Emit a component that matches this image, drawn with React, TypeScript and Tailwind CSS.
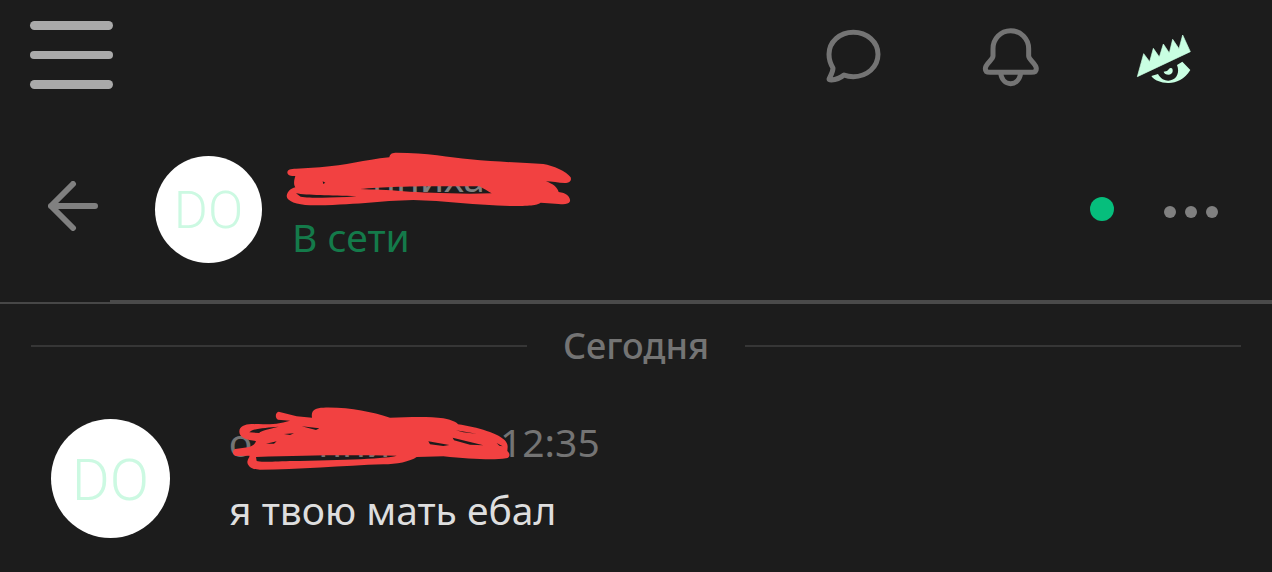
import type { ReactNode } from "react";

interface Message {
  id: number;
  initials: string;
  time: string;
  text: string;
}

const messages: Message[] = [
  { id: 1, initials: "DO", time: "12:35", text: "я твою мать ебал" },
];

export default function App() {
  return (
    <div className="min-h-screen bg-[#1c1c1c] font-['Noto_Sans',sans-serif] text-[#808080]">
      <TopBar />
      <ChatHeader />
      <main>
        <DayDivider>Сегодня</DayDivider>
        {messages.map((m) => (
          <MessageRow key={m.id} message={m} />
        ))}
      </main>
    </div>
  );
}

function TopBar() {
  return (
    <header className="flex h-[110px] items-start justify-between pl-[30px] pr-[76px] pt-[21px]">
      <button type="button" aria-label="Меню" className="flex h-[68px] w-[83px] flex-col justify-between">
        <span className="h-[9px] rounded-full bg-[#aaaaaa]" />
        <span className="h-2 rounded-full bg-[#aaaaaa]" />
        <span className="h-[9px] rounded-full bg-[#aaaaaa]" />
      </button>
      <nav className="flex gap-24 pt-1.5 text-[#747474]">
        <button type="button" aria-label="Сообщения">
          <svg viewBox="72 51 180 180" className="size-[60px]" fill="none" stroke="currentColor" strokeWidth="15" strokeLinejoin="round">
            <path d="M132 195C142 199 152 200 160 200C201 200 234 171 234 133C234 96 201 67 160 67C119 67 87 96 87 133C87 149 92 163 99 174C99 186 93 195 88 205C86 209 89 210 94 210C109 209 121 204 132 195Z" />
          </svg>
        </button>
        <button type="button" aria-label="Уведомления">
          <svg viewBox="540 51 180 180" className="size-[60px]" fill="none" stroke="currentColor" strokeWidth="15" strokeLinejoin="round">
            <path d="M632 62C602 62 579 86 579 116V138C579 150 556 160 556 176C556 184 562 187 570 187H694C703 187 709 184 709 176C709 160 686 150 686 138V116C686 86 662 62 632 62Z" />
            <path d="M602 188C604 208 616 221 632 221C648 221 660 208 662 188" />
          </svg>
        </button>
        <a href="#home" aria-label="Главная" className="text-[#c9ffe2]">
          <svg viewBox="48 21 180 180" className="size-[60px]" fill="currentColor">
            <path d="M52 170L71 101L89 125L100 85L118 111L130 72L148 99L158 58L177 86L188 45L211 95Z" stroke="currentColor" strokeWidth="2" strokeLinejoin="round" />
            <path d="M94 168L114 162C124 180 140 184 152 181C170 177 180 158 171 135L187 125L211 150C193 179 166 190 144 189C122 188 104 182 94 168Z" />
            <path d="M131 155L141 153L150 144L156 145C161 153 157 164 146 164C138 164 132 161 131 155Z" />
          </svg>
        </a>
      </nav>
    </header>
  );
}

function ChatHeader() {
  return (
    <section>
      <div className="flex h-[190px] items-start pl-12 pr-[54px] pt-[37px]">
        <div className="flex flex-1 items-center">
          <button type="button" aria-label="Назад" className="pb-1.5">
            <svg viewBox="84 126 150 150" className="size-[50px]" fill="none" stroke="currentColor" strokeWidth="18" strokeLinecap="round" strokeLinejoin="round">
              <path d="M93 201H225M159 135L93 201L159 267" />
            </svg>
          </button>
          <div className="ml-[57px] flex size-[107px] items-center justify-center rounded-full bg-white pt-1 font-['Roboto',sans-serif] text-[52px] font-light text-[#ccf9e2]">
            DO
          </div>
          <div className="ml-[30px] pb-1 text-[39px] leading-[60px]">
            <div className="relative h-[60px]">
              <span className="pl-20">нниха</span>
              <HeaderScribble />
            </div>
            <p className="text-[#147a4a]">В сети</p>
          </div>
          <span className="ml-auto size-6 rounded-full bg-[#06be7c]" />
          <button type="button" aria-label="Ещё" className="ml-[50px] flex gap-[9px] pt-1.5">
            <span className="size-3 rounded-full bg-[#808080]" />
            <span className="size-3 rounded-full bg-[#808080]" />
            <span className="size-3 rounded-full bg-[#808080]" />
          </button>
        </div>
      </div>
      <div className="flex h-1 items-end">
        <div className="h-0.5 w-[110px] bg-[#474747]" />
        <div className="h-1 flex-1 bg-[#4a4a4a]" />
      </div>
    </section>
  );
}

function DayDivider({ children }: { children: ReactNode }) {
  return (
    <div className="mt-4 flex items-center gap-9 px-[31px]">
      <div className="h-0.5 flex-1 bg-[#363636]" />
      <h2 className="text-[36px] font-medium leading-[52px] text-[#747474]">{children}</h2>
      <div className="h-0.5 flex-1 bg-[#363636]" />
    </div>
  );
}

function MessageRow({ message }: { message: Message }) {
  return (
    <article className="flex items-start pl-[51px] pt-9">
      <div className="mt-[11px] flex size-[119px] items-center justify-center rounded-full bg-white pt-1 font-['Roboto',sans-serif] text-[58px] font-light text-[#ccf9e2]">
        {message.initials}
      </div>
      <div className="ml-[59px] text-[39px] leading-[68px]">
        <div className="relative flex text-[#747474]">
          <span className="w-[271px]">
            о<span className="pl-[66px]">нни</span>
          </span>
          <time>{message.time}</time>
          <MessageScribble />
        </div>
        <p className="text-[#dedede]">{message.text}</p>
      </div>
    </article>
  );
}

// marker strokes that hide the names
function HeaderScribble() {
  return (
    <svg viewBox="0 0 960 210" className="absolute -left-[22px] -top-[7px] h-[70px] w-[320px] max-w-none" fill="#f24141" fillRule="evenodd">
      <path d="M52 98C52 88 62 86 78 86L150 82C230 76 280 60 358 52C360 40 368 38 380 38C470 38 540 52 600 58C680 66 760 68 820 72C850 78 888 92 902 112C906 124 896 129 885 129C865 129 845 124 828 124C850 132 862 142 866 156C890 158 902 172 900 184C896 194 880 194 866 192L812 188C800 196 780 198 720 198C620 196 520 182 430 180C330 182 250 196 120 196C80 194 50 184 50 168C52 154 62 146 76 142C70 134 72 120 76 108C62 108 54 106 52 98Z M78 160C110 166 180 166 260 169C180 175 120 174 92 170Z M270 147C350 138 500 138 628 139C640 146 655 154 665 160C560 163 460 158 400 154C350 149 310 149 270 147Z M158 124L166 128L160 132Z" />
    </svg>
  );
}

function MessageScribble() {
  return (
    <svg viewBox="0 0 960 240" className="absolute -left-[19px] -top-[13px] h-20 w-[320px] max-w-none" fill="#f24141" fillRule="evenodd">
      <path d="M88 110C88 94 104 88 124 87C160 88 200 90 240 77L204 74C194 68 196 52 206 50L260 64L306 68C302 46 316 38 340 38C420 36 480 50 540 68C600 66 660 64 700 70C730 76 742 84 744 88C800 96 870 116 888 140C896 152 892 160 892 168C902 176 900 190 888 190C850 196 780 192 700 184L620 186C600 200 560 208 520 208C400 212 260 224 150 224C124 224 112 212 112 200C114 190 120 186 118 182L80 183C66 182 66 166 76 162L118 156C130 152 136 146 138 138C110 134 88 128 88 110Z M118 112C126 100 170 98 206 95C170 104 150 108 148 114Z M138 186C300 180 420 180 560 182C540 190 400 196 240 198C180 200 150 202 140 198Z M275 94L328 100L318 105Z M222 117L252 115L240 120Z M168 146L200 139L192 146Z M655 139L718 150L700 153L660 148Z M728 128L820 151L780 149L732 136Z M738 106L800 116L760 112Z M860 144L878 154L868 152Z" />
    </svg>
  );
}
